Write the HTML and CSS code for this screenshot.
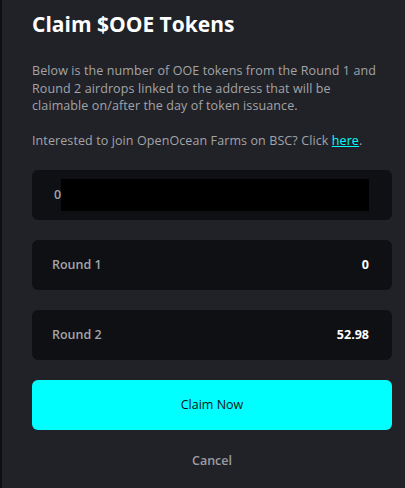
FILE: index.html
```html
<!DOCTYPE html>
<html>
<head>
<meta charset="utf-8">
<link rel="stylesheet" href="styles.css">
</head>
<body>
<div class="modal">
  <h1 class="title">Claim $OOE Tokens</h1>
  <p class="desc">Below is the number of OOE tokens from the Round 1 and<br>Round 2 airdrops linked to the address that will be<br>claimable on/after the day of token issuance.</p>
  <p class="desc desc-gap">Interested to join OpenOcean Farms on BSC? Click <a class="link" href="#">here</a>.</p>
  <div class="cards">
    <div class="card card-address">
      <span class="addr-prefix">0</span>
      <span class="redact"></span>
    </div>
    <div class="card">
      <span class="label">Round 1</span>
      <span class="value">0</span>
    </div>
    <div class="card">
      <span class="label">Round 2</span>
      <span class="value">52.98</span>
    </div>
  </div>
  <button class="claim">Claim Now</button>
  <div class="cancel">Cancel</div>
</div>
</body>
</html>
```

FILE: styles.css
```css
html, body {
  margin: 0;
  padding: 0;
  height: 100%;
}
body {
  background: #212227;
  border-left: 2px solid #0d0e11;
  box-sizing: border-box;
  font-family: "Open Sans", "DejaVu Sans", sans-serif;
}
.modal {
  padding: 10px 13px 0 30px;
  display: flex;
  flex-direction: column;
}
.title {
  margin: 0;
  font-size: 21px;
  line-height: 28px;
  font-weight: 700;
  color: #ffffff;
}
.desc {
  margin: 24px 0 0;
  font-size: 12.5px;
  line-height: 17.5px;
  letter-spacing: 0.1px;
  color: #a3a4a8;
  white-space: nowrap;
}
.desc-gap {
  margin-top: 17.5px;
}
.link {
  color: #00ffff;
  text-decoration: underline;
}
.cards {
  margin-top: 20px;
  display: flex;
  flex-direction: column;
  gap: 20px;
}
.card {
  height: 50px;
  background: #0f1013;
  border-radius: 6px;
  display: flex;
  align-items: center;
  justify-content: space-between;
  padding: 0 23px 0 20px;
  box-sizing: border-box;
}
.card-address {
  justify-content: flex-start;
  padding-left: 22px;
}
.addr-prefix {
  color: #a3a4a8;
  font-size: 12.5px;
  font-weight: 600;
}
.redact {
  flex: 1;
  height: 32px;
  background: #000;
}
.label {
  color: #a3a4a8;
  font-size: 12.5px;
  font-weight: 600;
}
.value {
  color: #ffffff;
  font-size: 12.5px;
  font-weight: 700;
}
.claim {
  margin-top: 20px;
  height: 50px;
  border: none;
  border-radius: 6px;
  background: #00ffff;
  color: #111216;
  font-family: inherit;
  font-size: 12.5px;
  font-weight: 500;
}
.cancel {
  margin-top: 22px;
  text-align: center;
  color: #9c9da1;
  font-size: 12.5px;
  font-weight: 600;
}
```
